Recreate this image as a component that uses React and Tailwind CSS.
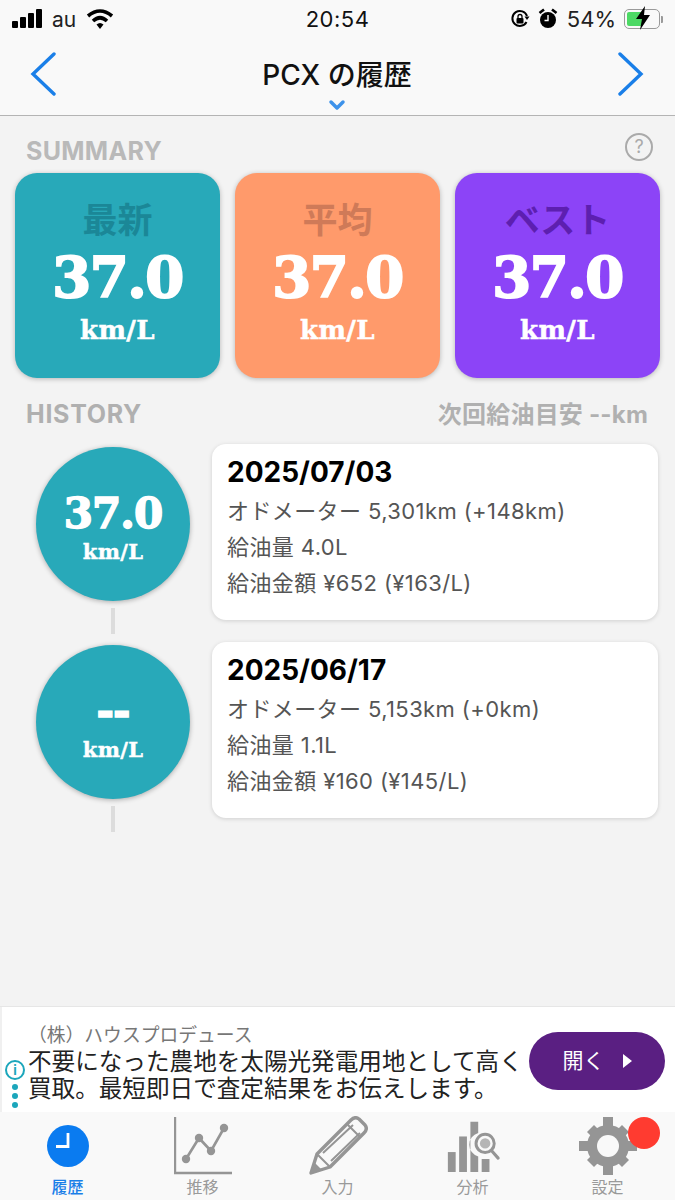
import { ChevronDown } from 'lucide-react';

const jp = "font-['Inter','Noto_Sans_CJK_JP',sans-serif]";
const slab = "font-['DejaVu_Serif',serif]";

const summary = [
  { label: '最新', bg: 'bg-[#28a9b9]', tone: 'text-[#1b8797]' },
  { label: '平均', bg: 'bg-[#ff9a6b]', tone: 'text-[#cf7a58]' },
  { label: 'ベスト', bg: 'bg-[#8c44f7]', tone: 'text-[#5d1fb0]' },
];

const history = [
  { value: '37.0', date: '2025/07/03', odo: 'オドメーター 5,301km (+148km)', fuel: '給油量 4.0L', cost: '給油金額 ¥652 (¥163/L)' },
  { value: '--', date: '2025/06/17', odo: 'オドメーター 5,153km (+0km)', fuel: '給油量 1.1L', cost: '給油金額 ¥160 (¥145/L)' },
];

function StatusBar() {
  return (
    <div className="h-[38px] flex items-center justify-between pl-[12px] pr-[12px] relative">
      <div className="flex items-center gap-[10px]">
        <div className="flex items-end gap-[2px] h-[20px] pb-[1px]">
          <span className="w-[6px] h-[7px] bg-black rounded-[1px]" />
          <span className="w-[6px] h-[11px] bg-black rounded-[1px]" />
          <span className="w-[6px] h-[15px] bg-black rounded-[1px]" />
          <span className="w-[6px] h-[19px] bg-black rounded-[1px]" />
        </div>
        <span className="text-[21px] leading-none text-[#222]">au</span>
        <svg width="28" height="22" viewBox="0 0 28 22">
          <path d="M2 8 Q14 -2 26 8" fill="none" stroke="#000" strokeWidth="3.6" />
          <path d="M7 13 Q14 6.5 21 13" fill="none" stroke="#000" strokeWidth="3.6" />
          <path d="M10.5 16.5 Q14 13.5 17.5 16.5 L14 21 Z" fill="#000" />
        </svg>
      </div>
      <span className="absolute left-0 right-0 text-center text-[22px] leading-none text-[#111] tracking-[0.5px] pointer-events-none">20:54</span>
      <div className="flex items-center">
        <svg width="20" height="20" viewBox="0 0 20 20" className="mr-[8px]">
          <path d="M16.5 13 A7.5 7.5 0 1 1 17 7" fill="none" stroke="#000" strokeWidth="2" />
          <path d="M14.5 7.5 L19.5 7.5 L17 11 Z" fill="#000" />
          <rect x="6.5" y="9" width="7" height="5.5" rx="1" fill="#000" />
          <path d="M8 9 V7.5 a2 2 0 0 1 4 0 V9" fill="none" stroke="#000" strokeWidth="1.3" />
        </svg>
        <svg width="20" height="22" viewBox="0 0 20 22" className="mr-[9px]">
          <circle cx="10" cy="12" r="8" fill="#000" />
          <path d="M1.5 5 L6 1.5 M18.5 5 L14 1.5" stroke="#000" strokeWidth="2.6" />
          <path d="M10 7 V12.5 H6.5" fill="none" stroke="#fff" strokeWidth="1.4" />
        </svg>
        <span className="text-[22px] leading-none text-[#222] mr-[8px]">54%</span>
        <div className="relative w-[36px] h-[20px] rounded-[5px] border-[1.5px] border-[#9a9a9a] p-[2px]">
          <div className="w-[16px] h-full rounded-[2px] bg-[#4cd964]" />
          <svg width="18" height="26" viewBox="0 0 18 26" className="absolute left-[9px] top-[-5px]">
            <path d="M11 1 L2 14 H8 L6 25 L16 10 H10 Z" fill="#000" />
          </svg>
        </div>
        <span className="w-[2px] h-[7px] ml-[1px] bg-[#9a9a9a] rounded-r-[1px]" />
      </div>
    </div>
  );
}

function NavBar() {
  return (
    <div className="h-[78px] border-b border-[#b4b4b4] flex items-center justify-between pl-[30px] pr-[31px] relative">
      <svg width="26" height="44" viewBox="0 0 26 44" className="mt-[-6px]">
        <path d="M24 2 L3 22 L24 42" fill="none" stroke="#1a7fe8" strokeWidth="3.4" strokeLinecap="round" />
      </svg>
      <div className="flex flex-col items-center mt-[12px]">
        <h1 className="text-[28px] leading-[36px] font-medium text-[#111]">PCX の履歴</h1>
        <ChevronDown size={24} strokeWidth={3.5} className="text-[#3d92ea] mb-[-9px]" absoluteStrokeWidth />
      </div>
      <svg width="26" height="44" viewBox="0 0 26 44" className="mt-[-6px]">
        <path d="M2 2 L23 22 L2 42" fill="none" stroke="#1a7fe8" strokeWidth="3.4" strokeLinecap="round" />
      </svg>
    </div>
  );
}

function SummaryCard({ label, bg, tone }) {
  return (
    <div className={`${bg} w-[205px] h-[205px] rounded-[22px] shadow-[0_1px_5px_rgba(0,0,0,0.25)] flex flex-col items-center text-white`}>
      <span className={`${tone} text-[35px] leading-[40px] font-bold mt-[27px]`}>{label}</span>
      <span className={`${slab} text-[56px] leading-[58px] font-bold mt-[8px] tracking-[-1.5px] [-webkit-text-stroke:2px_#fff]`}>37.0</span>
      <span className={`${slab} text-[26px] leading-[28px] font-bold mt-[10px] tracking-[0.4px] [-webkit-text-stroke:0.5px_#fff]`}>km/L</span>
    </div>
  );
}

function HistoryRow({ value, date, odo, fuel, cost }) {
  return (
    <div className="flex">
      <div className="w-[154px] ml-[36px] flex flex-col items-center pt-[3px]">
        <div className="w-[154px] h-[154px] rounded-full bg-[#28a9b9] shadow-[0_1px_5px_rgba(0,0,0,0.3)] flex flex-col items-center text-white">
          <span className={`${slab} text-[42px] leading-[46px] font-bold mt-[44px] tracking-[-1px] [-webkit-text-stroke:1.5px_#fff]`}>{value}</span>
          <span className={`${slab} text-[21px] leading-[22px] font-bold mt-[4px] tracking-[0.3px] [-webkit-text-stroke:0.4px_#fff]`}>km/L</span>
        </div>
        <div className="w-[4px] h-[26px] bg-[#dcdcdc] mt-[7px]" />
      </div>
      <div className="w-[446px] h-[176px] ml-[22px] bg-white rounded-[14px] shadow-[0_1px_4px_rgba(0,0,0,0.15)] pl-[15px] pt-[10px]">
        <div className="text-[28px] leading-[36px] font-bold text-black">{date}</div>
        <div className="text-[22px] leading-[36px] text-[#555] mt-[3px] tracking-[0.4px]">{odo}</div>
        <div className="text-[22px] leading-[36px] text-[#555] tracking-[0.4px]">{fuel}</div>
        <div className="text-[22px] leading-[36px] text-[#555] tracking-[0.4px]">{cost}</div>
      </div>
    </div>
  );
}

function AdBanner() {
  return (
    <div className="h-[106px] bg-white border-t border-[#e6e6e6] relative flex">
      <div className="absolute left-0 top-0 bottom-0 w-[2px] bg-[#f0f0f0]" />
      <div className="w-[28px] flex flex-col items-center pt-[53px] pl-[2px]">
        <div className="w-[20px] h-[20px] rounded-full border-2 border-[#1ba6bb] flex items-center justify-center text-[13px] leading-none font-bold text-[#1ba6bb]">i</div>
        <div className="flex flex-col gap-[3px] mt-[4px]">
          <span className="w-[6px] h-[6px] rounded-full bg-[#1ba6bb]" />
          <span className="w-[6px] h-[6px] rounded-full bg-[#1ba6bb]" />
          <span className="w-[6px] h-[6px] rounded-full bg-[#1ba6bb]" />
        </div>
      </div>
      <div className="w-[501px] pt-[17px]">
        <div className="text-[18.8px] leading-[24px] text-[#777]">（株）ハウスプロデュース</div>
        <div className="text-[23.6px] leading-[27px] text-[#222] whitespace-nowrap">不要になった農地を太陽光発電用地として高く</div>
        <div className="text-[23.6px] leading-[27px] text-[#222] whitespace-nowrap">買取。最短即日で査定結果をお伝えします。</div>
      </div>
      <div className="w-[136px] h-[58px] mt-[25px] rounded-full bg-[#5a1f82] flex items-center justify-center gap-[18px] text-white text-[21px]">
        <span>開く</span>
        <span className="w-0 h-0 border-y-[7px] border-y-transparent border-l-[9px] border-l-white" />
      </div>
    </div>
  );
}

function Tab({ label, active, children }) {
  return (
    <div className="w-[135px] flex flex-col items-center relative">
      <div className="h-[62px] flex items-center justify-center">{children}</div>
      <span className={`text-[16px] leading-[20px] ${active ? 'text-[#1a7fe8] font-medium' : 'text-[#9a9a9a]'}`}>{label}</span>
    </div>
  );
}

function TabBar() {
  return (
    <div className="h-[88px] bg-[#f9f9f9] flex pt-[3px]">
      <Tab label="履歴" active>
        <svg width="42" height="42" viewBox="0 0 42 42">
          <circle cx="21" cy="21" r="21" fill="#0a7bf0" />
          <path d="M21 8 V21.5 H9" fill="none" stroke="#fff" strokeWidth="2.8" />
        </svg>
      </Tab>
      <Tab label="推移">
        <svg width="58" height="58" viewBox="0 0 58 58">
          <path d="M1 0 V56 H58" fill="none" stroke="#959595" strokeWidth="2.4" />
          <path d="M12 42 L25 21 L37 34 L50 11" fill="none" stroke="#959595" strokeWidth="2.6" />
          <circle cx="12" cy="42" r="4.2" fill="#959595" />
          <circle cx="25" cy="21" r="4.2" fill="#959595" />
          <circle cx="37" cy="34" r="4.2" fill="#959595" />
          <circle cx="50" cy="11" r="4.2" fill="#959595" />
        </svg>
      </Tab>
      <Tab label="入力">
        <svg width="60" height="60" viewBox="0 0 60 60">
          <path d="M3 57 L9 38 L43 4 Q47 0 51 3 L57 9 Q60 13 56 17 L22 51 Z" fill="none" stroke="#959595" strokeWidth="3.4" strokeLinejoin="round" />
          <path d="M9 38 L22 51 M15 37 L45 9 M23 45 L52 17 M39 8 L52 21" fill="none" stroke="#959595" strokeWidth="2" />
          <path d="M3 57 L6 46 L14 54 Z" fill="#959595" />
        </svg>
      </Tab>
      <Tab label="分析">
        <svg width="58" height="52" viewBox="0 0 58 60">
          <rect x="0" y="37" width="9" height="23" fill="#959595" />
          <rect x="13" y="19" width="9" height="41" fill="#959595" />
          <path d="M26 2 H35 V15 A14 14 0 0 0 35 42 V60 H26 Z" fill="#959595" />
          <path d="M39 45 H48 V60 H39 Z" fill="#959595" />
          <circle cx="43" cy="27" r="10.5" fill="none" stroke="#959595" strokeWidth="3.4" />
          <path d="M37 27 a6 6 0 0 1 12 0 a6 6 0 0 1 -12 0" fill="#b5b5b5" />
          <path d="M50 35 L58 44" stroke="#959595" strokeWidth="3.6" strokeLinecap="round" />
        </svg>
      </Tab>
      <Tab label="設定">
        <div className="relative">
          <svg width="58" height="58" viewBox="0 0 58 58">
            <circle cx="29" cy="29" r="14.5" fill="none" stroke="#959595" strokeWidth="13" />
            <path d="M24 0 H34 V58 H24 Z" fill="#959595" />
            <path d="M0 24 H58 V34 H0 Z" fill="#959595" />
            <path d="M8 15 L15 8 L50 43 L43 50 Z" fill="#959595" />
            <path d="M43 8 L50 15 L15 50 L8 43 Z" fill="#959595" />
            <circle cx="29" cy="29" r="11" fill="#f9f9f9" />
          </svg>
          <span className="absolute right-[-23px] top-[0px] w-[32px] h-[32px] rounded-full bg-[#ff3b30]" />
        </div>
      </Tab>
    </div>
  );
}

export default function App() {
  return (
    <div className={`${jp} w-[675px] h-[1200px] bg-[#f3f3f3] flex flex-col overflow-hidden`}>
      <div className="bg-[#f9f9f9]">
        <StatusBar />
        <NavBar />
      </div>
      <div className="flex-1">
        <div className="flex items-center justify-between pl-[26px] pr-[22px] h-[57px] pt-[14px]">
          <span className="text-[25px] font-bold text-[#b9b9b9] tracking-[0.3px]">SUMMARY</span>
          <span className="w-[28px] h-[28px] rounded-full border-2 border-[#aaa] flex items-center justify-center text-[18px] leading-none text-[#aaa] mt-[-10px]">?</span>
        </div>
        <div className="flex gap-[15px] pl-[15px]">
          {summary.map((s) => (
            <SummaryCard key={s.label} {...s} />
          ))}
        </div>
        <div className="flex items-center justify-between pl-[26px] pr-[27px] mt-[22px] h-[30px]">
          <span className="text-[25px] font-bold text-[#b0b0b0] tracking-[0.7px]">HISTORY</span>
          <span className="text-[24px] font-bold text-[#b0b0b0] tracking-[0.2px]">次回給油目安 --km</span>
        </div>
        <div className="flex flex-col gap-[8px] mt-[14px]">
          {history.map((h) => (
            <HistoryRow key={h.date} {...h} />
          ))}
        </div>
      </div>
      <AdBanner />
      <TabBar />
    </div>
  );
}
